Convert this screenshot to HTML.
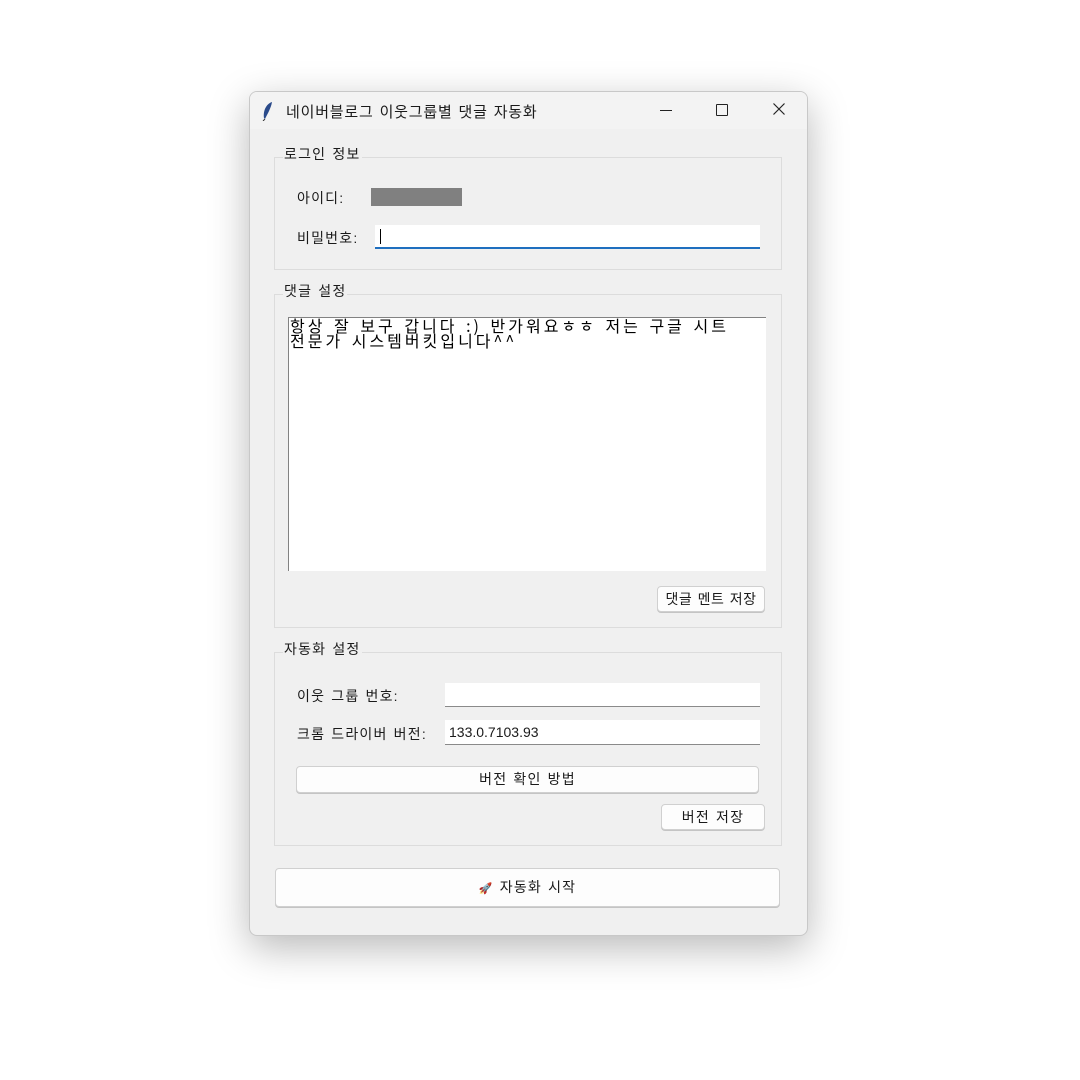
<!DOCTYPE html>
<html><head><meta charset="utf-8"><style>
body{margin:0;width:1080px;height:1080px;background:#fff;font-family:"Liberation Sans","Noto Sans CJK KR",sans-serif;font-size:14px;letter-spacing:1.2px;word-spacing:1px;color:#1a1a1a;position:relative;overflow:hidden}
.a{position:absolute;white-space:nowrap}
.win{left:249px;top:91px;width:557px;height:843px;background:#f0f0f0;border:1px solid #c8c8c8;border-radius:8px;box-shadow:0 12px 40px rgba(0,0,0,.28);overflow:hidden}
.tb{left:0;top:0;width:557px;height:37px;background:#f3f3f3}
.grp{border:1px solid #dcdcdc;box-sizing:border-box}
.lg{background:#f0f0f0;padding:0 1px;line-height:16px}
.ent{background:#fff;border-bottom:1px solid #8a8a8a;box-sizing:border-box}
.btn{background:#fdfdfd;border:1px solid #d0d0d0;border-radius:4px;box-sizing:border-box;text-align:center;box-shadow:0 1px 0 #c4c4c4}
</style></head><body>
<div class="a win">
 <div class="a tb"></div>
 <svg class="a" style="left:12px;top:9px" width="12" height="20" viewBox="0 0 12 20"><path d="M10 1 C4 3 1 10 2 17 L3 18 C6 12 9 7 10 1Z" fill="#2a4a8a"/><path d="M3 18 L1 20" stroke="#333" stroke-width="1"/></svg>
 <div class="a" style="left:36px;top:9px;font-size:15px;letter-spacing:0.8px">네이버블로그 이웃그룹별 댓글 자동화</div>
 <div class="a" style="left:410px;top:18px;width:12px;height:1px;background:#222"></div>
 <div class="a" style="left:466px;top:12px;width:10px;height:10px;border:1px solid #222;border-radius:1px"></div>
 <svg class="a" style="left:523px;top:11px" width="12" height="12" viewBox="0 0 12 12"><path d="M0.5 0.5L11.5 11.5M11.5 0.5L0.5 11.5" stroke="#222" stroke-width="1.2"/></svg>
</div>
<!-- login group -->
<div class="a grp" style="left:274px;top:157px;width:508px;height:113px"></div>
<div class="a lg" style="left:283px;top:146px">로그인 정보</div>
<div class="a" style="left:297px;top:188px">아이디:</div>
<div class="a" style="left:371px;top:188px;width:91px;height:18px;background:#808080"></div>
<div class="a" style="left:297px;top:228px">비밀번호:</div>
<div class="a ent" style="left:375px;top:225px;width:385px;height:24px;border-bottom:2px solid #1f6fbf"></div>
<div class="a" style="left:380px;top:229px;width:1px;height:15px;background:#000"></div>
<!-- comment group -->
<div class="a grp" style="left:274px;top:294px;width:508px;height:334px"></div>
<div class="a lg" style="left:283px;top:283px">댓글 설정</div>
<div class="a" style="left:288px;top:317px;width:478px;height:254px;background:#fff;border-top:1px solid #828282;border-left:1px solid #828282;box-sizing:border-box"></div>
<div class="a" style="left:290px;top:318px;font-family:'WenQuanYi Zen Hei','Noto Sans CJK KR',sans-serif;font-size:16px;line-height:15px;color:#000;letter-spacing:3px;word-spacing:2px">항상 잘 보구 갑니다 :) 반가워요ㅎㅎ 저는 구글 시트<br>전문가 시스템버킷입니다^^</div>
<div class="a btn" style="left:657px;top:586px;width:108px;height:26px;line-height:24px;letter-spacing:0.5px">댓글 멘트 저장</div>
<!-- auto group -->
<div class="a grp" style="left:274px;top:652px;width:508px;height:194px"></div>
<div class="a lg" style="left:283px;top:641px">자동화 설정</div>
<div class="a" style="left:297px;top:686px">이웃 그룹 번호:</div>
<div class="a ent" style="left:445px;top:683px;width:315px;height:24px"></div>
<div class="a" style="left:297px;top:724px">크롬 드라이버 버전:</div>
<div class="a ent" style="left:445px;top:720px;width:315px;height:25px"></div>
<div class="a" style="left:449px;top:724px;letter-spacing:0">133.0.7103.93</div>
<div class="a btn" style="left:296px;top:766px;width:463px;height:27px;line-height:25px">버전 확인 방법</div>
<div class="a btn" style="left:661px;top:804px;width:104px;height:26px;line-height:24px">버전 저장</div>
<div class="a btn" style="left:275px;top:868px;width:505px;height:39px;line-height:37px"><span style="font-size:11px">🚀</span> 자동화 시작</div>
</body></html>
